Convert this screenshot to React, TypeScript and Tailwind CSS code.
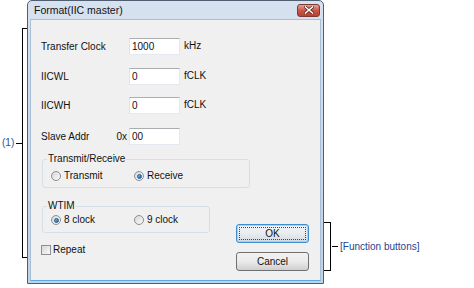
import React from "react";

function Field({ label, value, unit, prefix, className = "" }: { label: string; value: string; unit?: string; prefix?: string; className?: string }) {
  return (
    <div className={`flex items-center h-[17px] ${className}`}>
      <div className="w-[88px] flex justify-between pr-[2px]">
        <span>{label}</span>
        {prefix && <span>{prefix}</span>}
      </div>
      <div className="w-[51px] h-[17px] bg-white border border-[#e3e9ef] border-t-[#abadb3] border-l-[#e2e3ea] flex items-center pl-[2px]">
        {value}
      </div>
      {unit && <span className="ml-[4px] -mt-[2px]">{unit}</span>}
    </div>
  );
}

function Radio({ label, checked, className = "" }: { label: string; checked?: boolean; className?: string }) {
  return (
    <div className={`flex items-center h-[12px] ${className}`}>
      <div className="w-[10px] h-[10px] rounded-full border border-[#8e8f8f] bg-gradient-to-br from-[#d6d6d6] to-[#fbfbfb] flex items-center justify-center">
        {checked && <div className="w-[5px] h-[5px] rounded-full bg-gradient-to-br from-[#7fc4f4] to-[#0b5aa8] border border-[#1a5c9c]" />}
      </div>
      <span className="ml-[3px]">{label}</span>
    </div>
  );
}

function Group({ title, children, className = "" }: { title: string; children: React.ReactNode; className?: string }) {
  return (
    <fieldset className={`border border-[#d5dfe5] rounded-[3px] pl-[4px] ${className}`}>
      <legend className="px-[1px] leading-[12px]">{title}</legend>
      {children}
    </fieldset>
  );
}

export default function App() {
  return (
    <div className="w-[474px] h-[288px] bg-white flex text-[10px] leading-[12px] text-[#111] font-['Liberation_Sans',Arial,sans-serif]">
      {/* (1) annotation */}
      <div className="w-[27px] shrink-0 pt-[28px]">
        <div className="h-[230px] flex items-center pl-[2px]">
          <span className="w-[12px] text-[#1f4e9c]">(1)</span>
          <div className="ml-[2px] w-[6px] h-px bg-black" />
          <div className="w-[5px] h-full border-l border-t border-b border-black" />
        </div>
      </div>

      {/* dialog */}
      <div className="w-[297px] h-[284px] shrink-0 border border-[#4f5e70] rounded-t-[5px] bg-gradient-to-b from-[#d6e2ef] to-[#bfd2e8] flex flex-col px-[2px] pb-[2px]">
        <div className="h-[18px] flex items-center justify-between pl-[4px] pr-[1px]">
          <span className="text-[10.5px]">Format(IIC master)</span>
          <div className="w-[23px] h-[13px] rounded-[3px] border border-[#7b3a33] bg-gradient-to-b from-[#e7a195] via-[#c9574a] to-[#b8412f] flex items-center justify-center">
            <svg width="10" height="8" viewBox="0 0 10 8">
              <path d="M1.5 1 L8.5 7 M8.5 1 L1.5 7" stroke="#5a2018" strokeWidth="3" strokeLinecap="square" />
              <path d="M1.5 1 L8.5 7 M8.5 1 L1.5 7" stroke="#ffffff" strokeWidth="1.6" strokeLinecap="square" />
            </svg>
          </div>
        </div>
        <div className="flex-1 bg-[#f0f0f0] border border-[#a9bdd4] border-b-[#5aa7dc] flex flex-col pl-[10px] pr-[10px] pt-[18px]">
          <Field label="Transfer Clock" value="1000" unit="kHz" />
          <Field label="IICWL" value="0" unit="fCLK" className="mt-[13px]" />
          <Field label="IICWH" value="0" unit="fCLK" className="mt-[12px]" />
          <Field label="Slave Addr" prefix="0x" value="00" className="mt-[14px]" />

          <Group title="Transmit/Receive" className="w-[208px] ml-[1px] mt-[8px] pt-[5px] pb-[5px]">
            <div className="flex pl-[4px]">
              <Radio label="Transmit" className="w-[83px]" />
              <Radio label="Receive" checked />
            </div>
          </Group>

          <div className="flex items-start">
            <div className="flex flex-col">
              <Group title="WTIM" className="w-[168px] ml-[1px] mt-[12px] pt-[2px] pb-[6px]">
                <div className="flex pl-[4px]">
                  <Radio label="8 clock" checked className="w-[83px]" />
                  <Radio label="9 clock" />
                </div>
              </Group>
              <div className="flex items-center mt-[11px]">
                <div className="w-[10px] h-[10px] border border-[#8e8f8f] bg-gradient-to-br from-[#d6d6d6] to-[#fbfbfb]" />
                <span className="ml-[2px]">Repeat</span>
              </div>
            </div>
            <div className="ml-auto mr-[1px] mt-[36px] flex flex-col gap-[9px]">
              <div className="w-[73px] h-[19px] rounded-[3px] border border-[#3c8fd0] bg-gradient-to-b from-[#f4f6f8] via-[#e8ecef] to-[#d3dbe2] p-[2px] shadow-[inset_0_0_0_1px_#9fd3f5]">
                <div className="w-full h-full border border-dotted border-[#444] flex items-center justify-center">OK</div>
              </div>
              <div className="w-[73px] h-[19px] rounded-[3px] border border-[#707070] bg-gradient-to-b from-[#f2f2f2] via-[#ebebeb] to-[#cfcfcf] flex items-center justify-center">
                Cancel
              </div>
            </div>
          </div>
        </div>
      </div>

      {/* function buttons annotation */}
      <div className="pt-[222px]">
        <div className="h-[49px] flex items-center">
          <div className="w-[7px] h-full border-t border-b border-r border-black" />
          <div className="ml-[1px] w-[6px] h-px bg-black" />
          <span className="ml-[2px] text-[#1f4590]">[Function buttons]</span>
        </div>
      </div>
    </div>
  );
}
